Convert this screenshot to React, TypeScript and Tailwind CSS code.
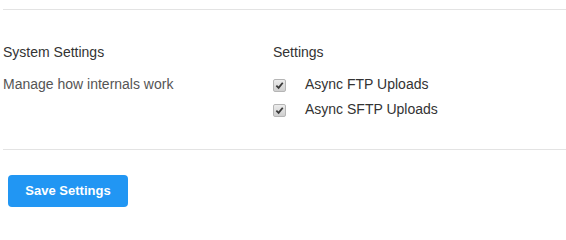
const options = ["Async FTP Uploads", "Async SFTP Uploads"];

function FakeCheckbox() {
  return (
    <span className="flex h-[13px] w-[13px] items-center justify-center rounded-[2px] border border-[#b5b5b5] bg-gradient-to-b from-[#ececec] to-[#cfcfcf]">
      <svg viewBox="0 0 10 10" className="h-[9px] w-[9px]">
        <path d="M1.5 5.2 L4 7.6 L8.6 2" fill="none" stroke="#3a3a3a" strokeWidth="2" />
      </svg>
    </span>
  );
}

export default function App() {
  return (
    <div className="min-h-[233px] bg-white pl-[3px] font-['Liberation_Sans',Arial,sans-serif] text-[14px] leading-[20px] text-[#333]">
      <div className="pt-[9px]">
        <hr className="border-0 border-t border-[#e3e3e3]" />
      </div>

      <div className="flex pt-[32px]">
        <div className="w-[270px]">
          <h3>System Settings</h3>
          <p className="mt-[12px] text-[#555]">Manage how internals work</p>
        </div>
        <div>
          <h3>Settings</h3>
          <div className="mt-[12px] flex flex-col gap-[5px]">
            {options.map((label) => (
              <label key={label} className="flex h-[20px] items-center">
                <span className="pt-[2px]">
                  <FakeCheckbox />
                </span>
                <span className="ml-[19px]">{label}</span>
              </label>
            ))}
          </div>
        </div>
      </div>

      <hr className="mt-[30px] border-0 border-t border-[#e3e3e3]" />

      <div className="pt-[25px] pl-[5px]">
        <button
          type="button"
          className="h-[32px] w-[120px] rounded-[4px] bg-[#2196f3] text-[13px] font-bold text-white"
        >
          Save Settings
        </button>
      </div>
    </div>
  );
}
